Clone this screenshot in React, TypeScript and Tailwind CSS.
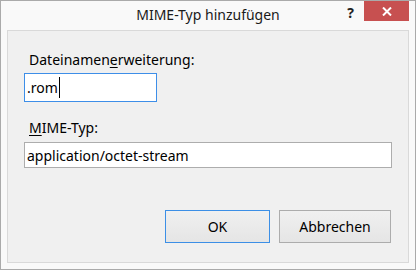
import React from "react";

export default function App() {
  const font = { fontFamily: '"Noto Sans", "Open Sans", sans-serif' };
  return (
    <div className="w-[416px] h-[270px] bg-white">
      <div
        className="w-[416px] h-[270px] border border-[#aaaaaa] bg-[#f9f9f9] flex flex-col"
        style={font}
      >
        {/* Title bar */}
        <div className="relative h-[29px] flex items-start justify-center shrink-0">
          <div className="pt-[4px] text-[14px] leading-[20px] text-[#1a1a1a]">MIME-Typ hinzufügen</div>
          <div className="absolute right-[61px] top-[4px] text-[14px] font-bold leading-[16px] text-[#222]">?</div>
          <div className="absolute right-[6px] top-0 w-[45px] h-[20px] bg-[#c75050] flex items-center justify-center">
            <svg width="10" height="9" viewBox="0 0 10 9">
              <path d="M1 0.5 L9 8.5 M9 0.5 L1 8.5" stroke="#fff" strokeWidth="2" />
            </svg>
          </div>
        </div>
        {/* Client area */}
        <div className="mx-[6px] mb-[6px] flex-1 border border-[#d9d9d9] bg-[#f0f0f0] flex flex-col text-[14px] text-black">
          <div className="pl-[21px] pt-[19px] leading-[19px]">
            Dateinamen<span className="underline underline-offset-2">e</span>rweiterung:
          </div>
          <div className="ml-[16px] mt-[4px] w-[133px] h-[29px] border border-[#3d8ee8] bg-white flex items-center pl-[2px] leading-[19px]">
            .rom<span className="inline-block w-[1px] h-[21px] bg-black ml-[1px]"></span>
          </div>
          <div className="pl-[21px] mt-[16px] leading-[19px]">
            <span className="underline underline-offset-2">M</span>IME-Typ:
          </div>
          <div className="ml-[16px] mt-[5px] w-[368px] h-[26px] border border-[#adadad] bg-white flex items-center pl-[2px] leading-[19px]">
            application/octet-stream
          </div>
          <div className="flex mt-[42px] ml-[157px] gap-[9px]">
            <button className="w-[105px] h-[33px] border border-[#3c8fe6] bg-gradient-to-b from-[#f0f0f0] to-[#e5e5e5] text-[14px] leading-[19px]">
              OK
            </button>
            <button className="w-[112px] h-[33px] border border-[#acacac] bg-gradient-to-b from-[#f0f0f0] to-[#e5e5e5] text-[14px] leading-[19px]">
              Abbrechen
            </button>
          </div>
        </div>
      </div>
    </div>
  );
}
